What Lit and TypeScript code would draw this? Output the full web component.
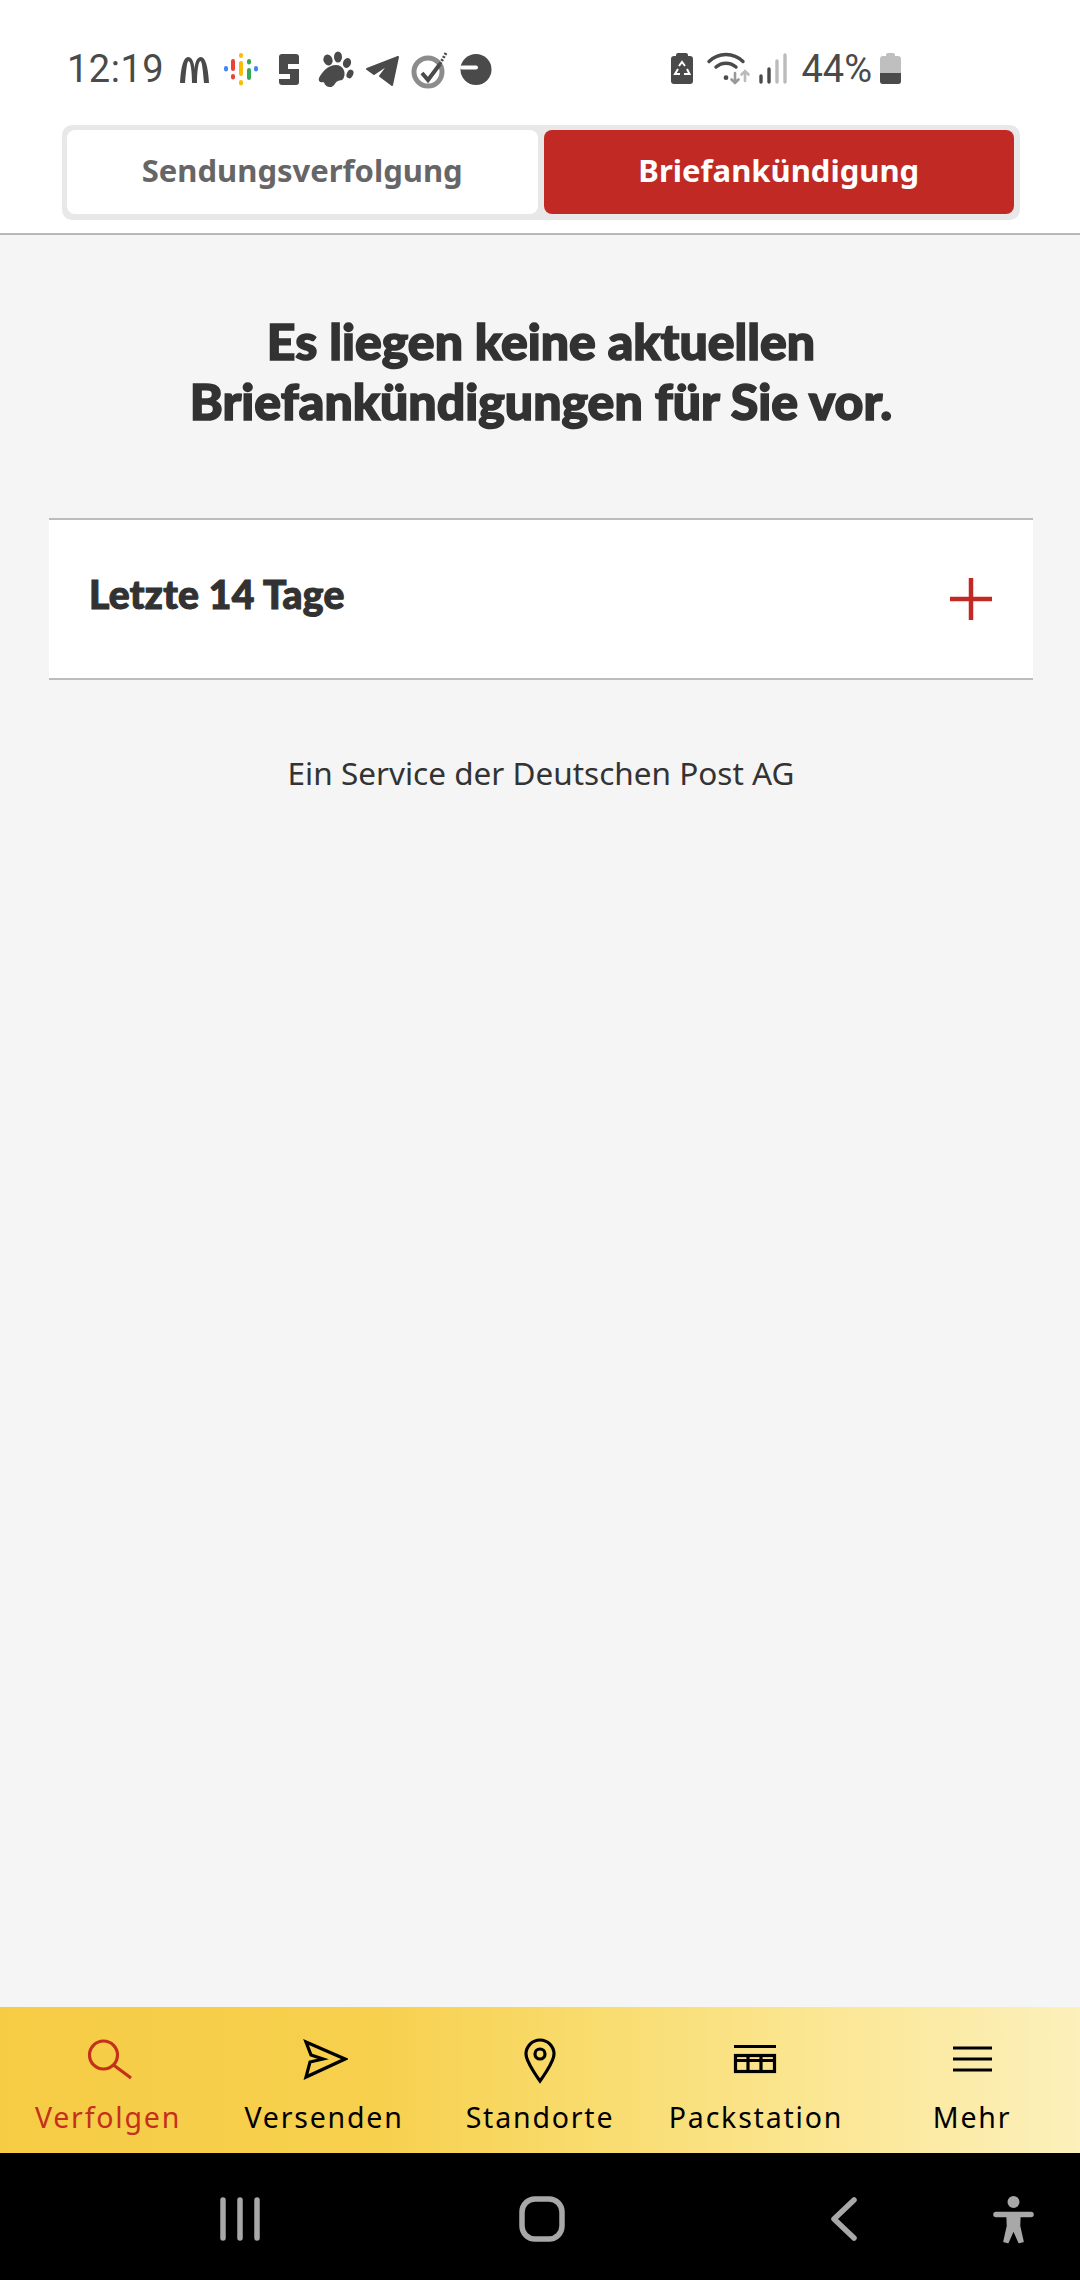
import { html, LitElement, css, svg } from 'lit';
import { customElement } from 'lit/decorators.js';

const navItems = [
  { label: 'Verfolgen', active: true, icon: svg`<circle cx="19.5" cy="19" r="14"/><path d="M29.5 29L47 42"/>` },
  { label: 'Versenden', active: false, icon: svg`<path d="M6 6L45 23L6 41L10 26L23 23L11 19Z"/>` },
  { label: 'Standorte', active: false, icon: svg`<path d="M24 45C24 45 10 26 10 18A14 14 0 0 1 38 18C38 26 24 45 24 45Z"/><circle cx="24" cy="18" r="5"/>` },
  { label: 'Packstation', active: false, icon: svg`<path d="M2 10.5H44"/><rect x="3.5" y="19.5" width="39" height="16"/><path d="M3.5 24.5H42.5M16 19.5V35.5M29 19.5V35.5"/>` },
  { label: 'Mehr', active: false, icon: svg`<path d="M5 12H44M5 23H44M5 34H44"/>` },
];

@customElement('app-root')
export class AppRoot extends LitElement {
  static styles = css`
    :host {
      display: flex;
      flex-direction: column;
      width: 1080px;
      height: 2280px;
      background: #f5f5f5;
      font-family: 'Noto Sans', sans-serif;
    }
    .status {
      display: flex;
      align-items: center;
      height: 137px;
      flex: none;
      padding: 0 179px 0 67px;
      box-sizing: border-box;
      background: #fff;
      color: #4a4a4a;
      font-family: Roboto, sans-serif;
      font-size: 38px;
    }
    .time {
      width: 104px;
      letter-spacing: 0.5px;
    }
    .slot {
      width: 47px;
      height: 40px;
      display: block;
    }
    .right {
      display: flex;
      align-items: center;
      gap: 8px;
      margin-left: auto;
    }
    .right span {
      margin-left: -2px;
    }
    .tabbar {
      flex: none;
      background: #fff;
      padding: 0 60px 13px 62px;
      margin-top: -12px;
      border-bottom: 2px solid #b8b8b8;
    }
    .tabs {
      display: flex;
      gap: 6px;
      height: 84px;
      padding: 5px 6px 6px 5px;
      background: #e8e8e8;
      border-radius: 10px;
    }
    .tab {
      flex: 1;
      display: flex;
      align-items: center;
      justify-content: center;
      padding-bottom: 5px;
      border-radius: 8px;
      background: #fff;
      color: #666;
      font-size: 31px;
      font-weight: 700;
    }
    .tab.on {
      background: #c12a24;
      color: #fff;
    }
    main {
      flex: 1;
      padding: 76px 47px 0 49px;
    }
    h1 {
      margin: 0;
      text-align: center;
      color: #323232;
      font-family: Lato, sans-serif;
      font-size: 50px;
      line-height: 60px;
      font-weight: 900;
      -webkit-text-stroke: 1.6px #323232;
    }
    .acc {
      display: flex;
      align-items: center;
      justify-content: space-between;
      height: 158px;
      margin-top: 87px;
      padding: 0 41px 0 40px;
      background: #fff;
      border-top: 2px solid #bcbcbc;
      border-bottom: 2px solid #bcbcbc;
      color: #323232;
      font-family: Lato, sans-serif;
      font-size: 39px;
      font-weight: 900;
      letter-spacing: 0.3px;
      -webkit-text-stroke: 1.1px #323232;
    }
    .acc span {
      margin-top: -10px;
    }
    .acc svg {
      display: block;
    }
    .foot {
      margin-top: 72px;
      text-align: center;
      color: #333;
      font-size: 31.5px;
      line-height: 42px;
    }
    nav {
      flex: none;
      display: grid;
      grid-template-columns: repeat(5, 216px);
      height: 146px;
      background: linear-gradient(90deg, #f6cc45 0%, #f7d04e 35%, #f9dc6e 55%, #fbe89a 80%, #fcf0bb 100%);
    }
    .item {
      display: flex;
      flex-direction: column;
      align-items: center;
      padding-top: 29px;
      color: #000;
      font-size: 28.5px;
      line-height: 38px;
      letter-spacing: 1.8px;
    }
    .item svg {
      display: block;
      fill: none;
      stroke: currentColor;
      stroke-width: 3.2;
      margin-bottom: 14px;
    }
    .item.on {
      color: #c4301c;
    }
    .sys {
      flex: none;
      display: flex;
      align-items: center;
      height: 127px;
      box-sizing: border-box;
      padding: 5px 0 0 220px;
      background: #000;
    }
    .sys svg {
      display: block;
      fill: none;
      stroke: #a8a8a8;
      stroke-width: 5.5;
      stroke-linecap: round;
      stroke-linejoin: round;
    }
    .sys .home {
      margin-left: 259px;
    }
    .sys .back {
      margin-left: 266px;
    }
    .sys .a11y {
      margin-left: 136px;
    }
  `;

  render() {
    return html`
      <div class="status">
        <span class="time">12:19</span>
        <svg class="slot" viewBox="0 0 47 40"><path d="M9 34C10 16 13 8 17 8C21 8 23 13 23.5 20C24 13 26 8 30 8C34 8 37 16 38 34H33C32 22 31 12 29.5 12C27.5 12 26 22 26 34H21C21 22 19.5 12 17.5 12C16 12 15 22 14 34Z" fill="#4a4a4a"/></svg>
        <svg class="slot" viewBox="0 0 47 40" fill="none" stroke-width="4" stroke-linecap="round">
          <path d="M8 19v1.5M38 19v1.5" stroke="#4285f4"/>
          <path d="M15 12v8M15 27v1.5" stroke="#ea4335"/>
          <path d="M23 6v1M23 14v11M23 33v1.5" stroke="#fbbc04"/>
          <path d="M31 12v1.5M31 21v8" stroke="#34a853"/>
        </svg>
        <svg class="slot" viewBox="0 0 47 40"><rect x="14" y="5" width="20" height="31" rx="3" fill="#4a4a4a"/><path d="M23 15H34V20H23ZM14 25H25V30H14Z" fill="#fff"/></svg>
        <svg class="slot" viewBox="0 0 47 40" fill="#4a4a4a">
          <path d="M7 29C10 23 16 16 24 16C31 16 34 23 32 28C31 32 28 31 26 32C23 33 22 39 17 38C12 37 13 33 11 33C8 34 6 32 7 29Z"/>
          <ellipse cx="16" cy="11" rx="4.5" ry="5.5" transform="rotate(-20 16 11)"/>
          <ellipse cx="26" cy="8" rx="4" ry="5.5"/>
          <ellipse cx="35" cy="14" rx="4" ry="5" transform="rotate(20 35 14)"/>
          <ellipse cx="38" cy="25" rx="3.2" ry="4.5" transform="rotate(25 38 25)"/>
        </svg>
        <svg class="slot" viewBox="0 0 47 40"><path d="M8 20L39 8L33 36L21 27L30 15L15 25Z" fill="#4a4a4a" stroke="#4a4a4a" stroke-width="2" stroke-linejoin="round"/></svg>
        <svg class="slot" viewBox="0 0 47 40" fill="none">
          <circle cx="22" cy="23" r="14" stroke="#8c8c8c" stroke-width="5"/>
          <path d="M16 24L22 31L34 15" stroke="#4a4a4a" stroke-width="4"/>
          <path d="M34 15L40 4" stroke="#4a4a4a" stroke-width="3" stroke-dasharray="2 1.5"/>
        </svg>
        <svg class="slot" viewBox="0 0 47 40"><circle cx="23" cy="20.5" r="15.5" fill="#4a4a4a"/><path d="M9 18.5H23" stroke="#fff" stroke-width="4" stroke-linecap="round"/></svg>
        <div class="right">
          <svg width="22" height="32" viewBox="0 0 22 32">
            <path d="M5 3V2Q5 0 7 0H15Q17 0 17 2V3H19Q22 3 22 6V28Q22 31 19 31H3Q0 31 0 28V6Q0 3 3 3Z" fill="#4a4a4a"/>
            <path d="M8 13L11 9L14 13M16 16L18.5 21H13M9 21H4L7 16" fill="none" stroke="#fff" stroke-width="2"/>
          </svg>
          <svg width="50" height="40" viewBox="0 0 50 40" fill="none" stroke-linecap="round">
            <path d="M8 12.5A24 24 0 0 1 42 12.5M15 18A15 15 0 0 1 35 18" stroke="#4a4a4a" stroke-width="3.4"/>
            <circle cx="25" cy="28.7" r="2.4" fill="#4a4a4a"/>
            <path d="M34 24V34M30.5 30.5L34 34L37.5 30.5" stroke="#999" stroke-width="2.6"/>
            <path d="M44 32V22M40.5 25.5L44 22L47.5 25.5" stroke="#bbb" stroke-width="2.6"/>
          </svg>
          <svg width="36" height="40" viewBox="0 0 36 40" stroke-width="3.4" stroke-linecap="round">
            <path d="M2 27V33M10 20V33" stroke="#4a4a4a"/>
            <path d="M18 12V33M26 6V33" stroke="#bbb"/>
          </svg>
          <span>44%</span>
          <svg width="21" height="32" viewBox="0 0 21 32">
            <path d="M6 3V2Q6 0 8 0H13Q15 0 15 2V3H18Q21 3 21 6V28Q21 31 18 31H3Q0 31 0 28V6Q0 3 3 3Z" fill="#bfbfbf"/>
            <path d="M0 20H21V28Q21 31 18 31H3Q0 31 0 28Z" fill="#4a4a4a"/>
          </svg>
        </div>
      </div>
      <div class="tabbar">
        <div class="tabs">
          <div class="tab">Sendungsverfolgung</div>
          <div class="tab on">Briefankündigung</div>
        </div>
      </div>
      <main>
        <h1>Es liegen keine aktuellen<br />Briefankündigungen für Sie vor.</h1>
        <div class="acc">
          <span>Letzte 14 Tage</span>
          <svg width="42" height="42" viewBox="0 0 42 42"><path d="M21 0V42M0 21H42" stroke="#c12a24" stroke-width="4.5"/></svg>
        </div>
        <div class="foot">Ein Service der Deutschen Post AG</div>
      </main>
      <nav>
        ${navItems.map(
          (n) => html`
            <div class="item ${n.active ? 'on' : ''}">
              <svg width="48" height="48" viewBox="0 0 48 48">${n.icon}</svg>
              ${n.label}
            </div>
          `,
        )}
      </nav>
      <div class="sys">
        <svg width="40" height="44" viewBox="0 0 40 44"><path d="M3 3V41M20 3V41M37 3V41"/></svg>
        <svg class="home" width="46" height="46" viewBox="0 0 46 46"><rect x="3" y="3" width="40" height="40" rx="13"/></svg>
        <svg class="back" width="26" height="44" viewBox="0 0 26 44"><path d="M23 3L3 22L23 41"/></svg>
        <svg class="a11y" width="42" height="52" viewBox="0 0 42 52">
          <circle cx="20.5" cy="9" r="6" fill="#a8a8a8" stroke="none"/>
          <path d="M3 21.5H38"/>
          <path d="M14 21H27L26.5 33L30 48.5L26 49.5L20.5 37L15 49.5L11 48.5L14.5 33Z" fill="#a8a8a8" stroke-width="1.5"/>
        </svg>
      </div>
    `;
  }
}

declare global {
  interface HTMLElementTagNameMap {
    'app-root': AppRoot;
  }
}
